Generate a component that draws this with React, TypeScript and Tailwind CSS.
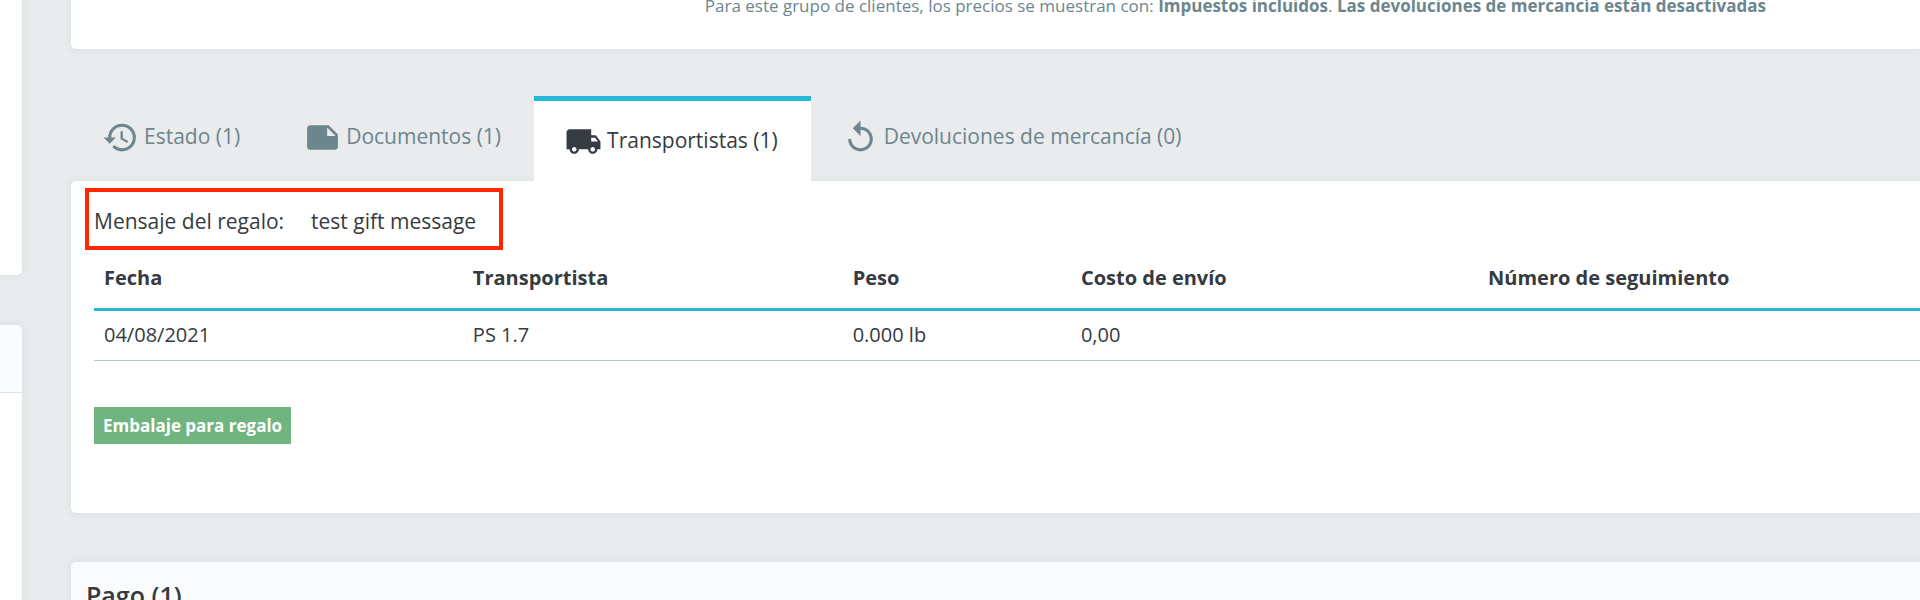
import type { ReactNode } from "react";
import type { IconType } from "react-icons";
import { MdHistory, MdLocalShipping, MdNote, MdReplay } from "react-icons/md";

type Tab = { label: string; icon: IconType; active?: boolean };

const tabs: Tab[] = [
  { label: "Estado (1)", icon: MdHistory },
  { label: "Documentos (1)", icon: MdNote },
  { label: "Transportistas (1)", icon: MdLocalShipping, active: true },
  { label: "Devoluciones de mercancía (0)", icon: MdReplay },
];

const columns = [
  { title: "Fecha", width: "w-[20.2%]" },
  { title: "Transportista", width: "w-[20.8%]" },
  { title: "Peso", width: "w-[12.5%]" },
  { title: "Costo de envío", width: "w-[22.3%]" },
  { title: "Número de seguimiento", width: "w-auto" },
];

const shipments = [["04/08/2021", "PS 1.7", "0.000 lb", "0,00", ""]];

function Card({ className, children }: { className: string; children?: ReactNode }) {
  return (
    <section
      className={`border-[#dbe6e9] bg-white shadow-[0_0_6px_2px_rgba(0,0,0,0.03)] ${className}`}
    >
      {children}
    </section>
  );
}

function TabButton({ label, icon: Icon, active }: Tab) {
  return (
    <button
      type="button"
      role="tab"
      aria-selected={!!active}
      className={
        active
          ? "relative z-10 -mb-px flex items-center gap-[5px] border-t-[5px] border-[#25b9d7] bg-white pt-px pr-[33px] pl-[31px] text-[#363a41]"
          : "flex items-center gap-[5px] pr-[33px] pb-px pl-[31px] text-[#6c868e]"
      }
    >
      <Icon className="size-[37px]" aria-hidden="true" />
      <span className="pb-[3px]">{label}</span>
    </button>
  );
}

export default function App() {
  return (
    <div className="flex h-screen gap-[47px] overflow-hidden bg-[#e9ebec] font-['Open_Sans',sans-serif] text-[#363a41]">
      <aside className="flex w-[23px] shrink-0 flex-col gap-12">
        <Card className="h-[276px] shrink-0 rounded-br-md border-r border-b" />
        <Card className="flex-1 rounded-tr-md border-t border-r">
          <div className="h-[68px] rounded-tr-md border-b border-[#dbe6e9] bg-[#fafbfc]" />
        </Card>
      </aside>

      <main className="-mt-[7px] min-w-0 flex-1">
        <Card className="rounded-bl-md border-b border-l pb-[31px]">
          <p className="pr-[154px] text-right text-[17px] leading-[25px] whitespace-nowrap text-[#6c868e]">
            Para este grupo de clientes, los precios se muestran con:{" "}
            <strong className="font-bold">Impuestos incluidos</strong>.{" "}
            <strong className="font-bold">
              Las devoluciones de mercancía están desactivadas
            </strong>
          </p>
        </Card>

        <div
          role="tablist"
          className="mt-[46px] flex h-[84px] pl-px text-[21px] leading-8 whitespace-nowrap"
        >
          {tabs.map((tab) => (
            <TabButton key={tab.label} {...tab} />
          ))}
        </div>

        <Card className="rounded-l-md border-y border-l pt-[7px] pb-[69px]">
          <p className="ml-[14px] inline-flex gap-[27px] border-4 border-[#ff2600] pt-[13px] pr-[23px] pb-[9px] pl-[5px] text-[21px] leading-8 whitespace-nowrap">
            <span>Mensaje del regalo:</span>
            <span>test gift message</span>
          </p>

          <div className="pl-[23px]">
            <table className="w-full table-fixed border-collapse text-left text-[20px] leading-7 whitespace-nowrap">
              <thead>
                <tr className="border-b-[3px] border-[#25b9d7]">
                  {columns.map((column) => (
                    <th key={column.title} className={`px-[10px] pt-[14px] pb-4 font-bold ${column.width}`}>
                      {column.title}
                    </th>
                  ))}
                </tr>
              </thead>
              <tbody>
                {shipments.map((row) => (
                  <tr key={row[0]} className="border-b border-[#b0c6ca]">
                    {row.map((cell, index) => (
                      <td key={columns[index].title} className="px-[10px] pt-[10px] pb-[11px]">
                        {cell}
                      </td>
                    ))}
                  </tr>
                ))}
              </tbody>
            </table>

            <span className="mt-[46px] inline-block bg-[#70b580] px-[9px] py-[6px] text-[17px] leading-[25px] font-bold text-white">
              Embalaje para regalo
            </span>
          </div>
        </Card>

        <Card className="mt-[47px] rounded-tl-md border-t border-l">
          <h3 className="rounded-tl-md border-b border-[#dbe6e9] bg-[#fafbfc] px-[15px] py-[17px] text-[25px] leading-8 font-semibold">
            Pago (1)
          </h3>
        </Card>
      </main>
    </div>
  );
}
